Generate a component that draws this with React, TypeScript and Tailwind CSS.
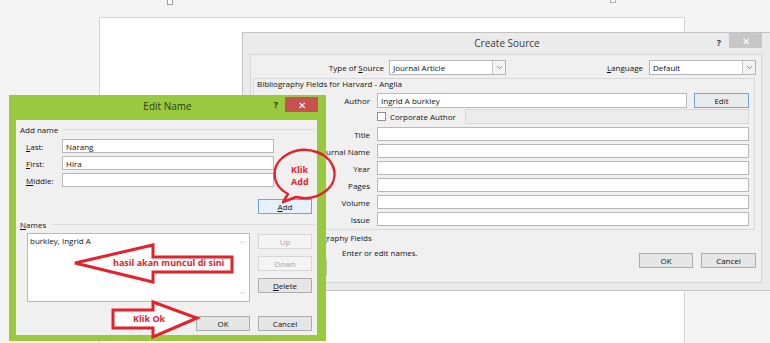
import { ChevronDown, ChevronUp } from "lucide-react";

function Btn({
  children,
  className = "",
  kind = "normal",
}: {
  children: React.ReactNode;
  className?: string;
  kind?: "normal" | "default" | "disabled";
}) {
  const look =
    kind === "default"
      ? "bg-[#e5f1fb] border-[#6ea7dc] text-[#111]"
      : kind === "disabled"
      ? "bg-[#f4f4f4] border-[#d6d6d6] text-[#a8a8a8]"
      : "bg-[#e6e6e6] border-[#adadad] text-[#111]";
  return (
    <div className={`h-[15px] w-[54px] border flex items-center justify-center ${look} ${className}`}>
      {children}
    </div>
  );
}

function Field({ className = "", children }: { className?: string; children?: React.ReactNode }) {
  return (
    <div className={`h-[14px] bg-white border border-[#b8b8b8] flex items-center pl-[3px] ${className}`}>
      {children}
    </div>
  );
}

function Select({ value, className = "" }: { value: string; className?: string }) {
  return (
    <div className={`h-[15px] bg-white border border-[#b5b5b5] flex items-center ${className}`}>
      <span className="flex-1 pl-[3px]">{value}</span>
      <div className="w-[13px] h-full border-l border-[#c8c8c8] bg-[#f3f3f3] flex items-center justify-center">
        <ChevronDown size={9} strokeWidth={2} color="#6b6b6b" />
      </div>
    </div>
  );
}

function CreateSource() {
  const rows = ["Title", "Journal Name", "Year", "Pages", "Volume", "Issue"];
  return (
    <div className="absolute left-[242px] top-[32px] w-[530px] h-[259px] bg-[#ebebeb] border border-[#c3c3c3] flex flex-col">
      {/* title bar */}
      <div className="grid grid-cols-[60px_1fr_60px] h-[21px]">
        <div />
        <div className="text-center text-[10px] leading-[21px] text-[#3a3a3a]">Create Source</div>
        <div className="flex justify-end items-start pr-[9px]">
          <span className="mt-[4px] mr-[8px] text-[9px] font-bold text-[#333]">?</span>
          <div className="w-[33px] h-[15px] bg-[#c7c7c7] flex items-center justify-center text-white text-[10px] leading-none">
            ✕
          </div>
        </div>
      </div>

      {/* body */}
      <div className="ml-[7px] w-[512px] h-[229px] bg-[#f0f0f0] border border-[#d6d6d6] flex flex-col">
        <div className="flex items-center h-[15px] mt-[5px]">
          <div className="w-[133px] text-right">
            Type of <span className="underline">S</span>ource
          </div>
          <Select value="Journal Article" className="ml-[5px] w-[117px]" />
          <div className="w-[137px] text-right">
            <span className="underline">L</span>anguage
          </div>
          <Select value="Default" className="ml-[6px] w-[107px]" />
        </div>

        <div className="ml-[2px] mt-[3px] w-[502px] h-[152px] border border-[#d9d9d9] flex flex-col pr-[5px]">
          <div className="pl-[3px] leading-[10px]">Bibliography Fields for Harvard - Anglia</div>

          <div className="flex items-center mt-[4px] h-[15px]">
            <div className="w-[116px] text-right">Author</div>
            <Field className="ml-[7px] w-[310px] h-[15px]">Ingrid A burkley</Field>
            <div className="ml-[7px] w-[55px] h-[15px] border border-[#6fa6d8] bg-[#e9ebed] flex items-center justify-center">
              Edit
            </div>
          </div>

          <div className="flex items-center mt-[1px] h-[15px]">
            <div className="w-[116px]" />
            <div className="ml-[7px] w-[9px] h-[9px] bg-white border border-[#8e8e8e]" />
            <span className="ml-[4px]">Corporate Author</span>
            <div className="ml-[9px] flex-1 h-[15px] bg-[#ececec] border border-[#d7d7d7]" />
          </div>

          <div className="flex flex-col gap-[3px] mt-[3px]">
            {rows.map((r) => (
              <div key={r} className="flex items-center h-[14px]">
                <div className="w-[116px] text-right">{r}</div>
                <Field className="ml-[7px] flex-1" />
              </div>
            ))}
          </div>
        </div>

        <div className="flex justify-between mt-[3px] pr-[5px]">
          <div className="flex flex-col">
            <div className="flex items-center h-[10px] pl-[4px]">
              <div className="w-[9px] h-[9px] bg-white border border-[#8e8e8e]" />
              <span className="ml-[4px] leading-[10px] whitespace-nowrap">Show All Bibliography Fields</span>
            </div>
            <div className="flex items-center h-[14px] mt-[2px]">
              <span className="ml-[91px]">Enter or edit names.</span>
            </div>
            <div className="flex items-center mt-[1px] pl-[4px] h-[15px]">
              <div className="w-[72px] h-[15px] bg-white border border-[#bdbdbd]" />
            </div>
          </div>
          <div className="flex gap-[8px] mt-[20px] items-start">
            <Btn>OK</Btn>
            <Btn className="w-[55px]">Cancel</Btn>
          </div>
        </div>
      </div>
    </div>
  );
}

function EditName() {
  const rows = [
    { k: "L", rest: "ast:", v: "Narang" },
    { k: "F", rest: "irst:", v: "Hira" },
    { k: "M", rest: "iddle:", v: "" },
  ];
  return (
    <div className="absolute left-[9px] top-[95px] w-[317px] h-[246px] bg-[#99c93e] flex flex-col">
      <div className="grid grid-cols-[56px_1fr_56px] h-[25px]">
        <div />
        <div className="text-center text-[10px] leading-[23px] text-[#2f3a22]">Edit Name</div>
        <div className="flex justify-end items-start pr-[8px]">
          <span className="mt-[4px] mr-[7px] text-[9px] font-bold text-[#253016]">?</span>
          <div className="mt-[2px] w-[33px] h-[15px] bg-[#c75050] flex items-center justify-center text-white text-[10px] leading-none">
            ✕
          </div>
        </div>
      </div>

      <div className="ml-[7px] w-[301px] h-[215px] bg-[#f0f0f0] flex flex-col">
        <div className="flex items-center mt-[3px] h-[12px] pl-[4px] pr-[2px]">
          <span>Add name</span>
          <div className="ml-[5px] flex-1 h-px bg-[#dcdcdc]" />
        </div>

        <div className="flex flex-col gap-[3px] mt-[4px]">
          {rows.map((r) => (
            <div key={r.k} className="flex items-center h-[14px] pl-[10px]">
              <span className="w-[36px]">
                <span className="underline">{r.k}</span>
                {r.rest}
              </span>
              <Field className="w-[212px]">{r.v}</Field>
            </div>
          ))}
        </div>

        <Btn kind="default" className="ml-[242px] mt-[12px]">
          <span className="underline">A</span>dd
        </Btn>

        <div className="flex items-center mt-[4px] h-[12px] pl-[4px] pr-[2px]">
          <span>
            <span className="underline">N</span>ames
          </span>
          <div className="ml-[5px] flex-1 h-px bg-[#dcdcdc]" />
        </div>

        <div className="flex mt-[3px] pl-[11px]">
          <div className="w-[223px] h-[69px] bg-white border border-[#b8b8b8] flex">
            <div className="flex-1 pl-[2px] pt-[1px]">burkley, Ingrid A</div>
            <div className="w-[14px] flex flex-col justify-between items-center py-[4px]">
              <ChevronUp size={8} strokeWidth={1.5} color="#a6a6a6" />
              <ChevronDown size={8} strokeWidth={1.5} color="#a6a6a6" />
            </div>
          </div>
          <div className="ml-[8px] flex flex-col gap-[7px] pt-[1px]">
            <Btn kind="disabled">Up</Btn>
            <Btn kind="disabled">Down</Btn>
            <Btn>
              <span className="underline">D</span>elete
            </Btn>
          </div>
        </div>

        <div className="flex gap-[8px] mt-[14px] ml-[180px]">
          <Btn>OK</Btn>
          <Btn>Cancel</Btn>
        </div>
      </div>
    </div>
  );
}

function Annotations() {
  const red = "#e3232b";
  return (
    <>
      <svg className="absolute left-0 top-0 pointer-events-none" width="770" height="343" viewBox="0 0 770 343">
        {/* speech bubble */}
        <path
          d="M 288 194 A 30 24 0 1 1 296 197 L 283 202 Z"
          fill="none"
          stroke={red}
          strokeWidth="2.5"
          strokeLinejoin="round"
        />
        {/* left arrow */}
        <polygon
          points="75,263 153,245 153,257 232,257 232,272 153,272 153,282"
          fill="white"
          stroke={red}
          strokeWidth="3"
          strokeLinejoin="miter"
        />
        {/* right arrow */}
        <polygon
          points="113,310 153,310 153,302 197,318 153,337 153,328 113,328"
          fill="white"
          stroke={red}
          strokeWidth="3"
          strokeLinejoin="miter"
        />
      </svg>
      <div className="absolute left-[291px] top-[164px] text-[9px] leading-[12px] font-bold text-[#e3232b]">
        Klik
        <br />
        Add
      </div>
      <div className="absolute left-[113px] top-[257px] text-[9px] leading-[12px] font-bold text-[#e3232b] whitespace-nowrap">
        hasil akan muncul di sini
      </div>
      <div className="absolute left-[133px] top-[313px] text-[9px] leading-[12px] font-bold text-[#e3232b] whitespace-nowrap">
        Klik Ok
      </div>
    </>
  );
}

export default function App() {
  return (
    <div className="relative w-[770px] h-[343px] overflow-hidden bg-[#f4f4f4] font-['Open_Sans',sans-serif] text-[8px] leading-[11px] text-[#111]">
      <div className="ml-[99px] mt-[17px] w-[586px] h-[340px] bg-white border border-[#d6d6d6]" />
      <div className="absolute left-[167px] top-[-1px] w-[6px] h-[6px] bg-white border border-[#9c9c9c]" />
      <div className="absolute left-[610px] top-[-3px] w-[6px] h-[6px] bg-white border border-[#b0b0b0]" />
      <CreateSource />
      <EditName />
      <Annotations />
    </div>
  );
}
